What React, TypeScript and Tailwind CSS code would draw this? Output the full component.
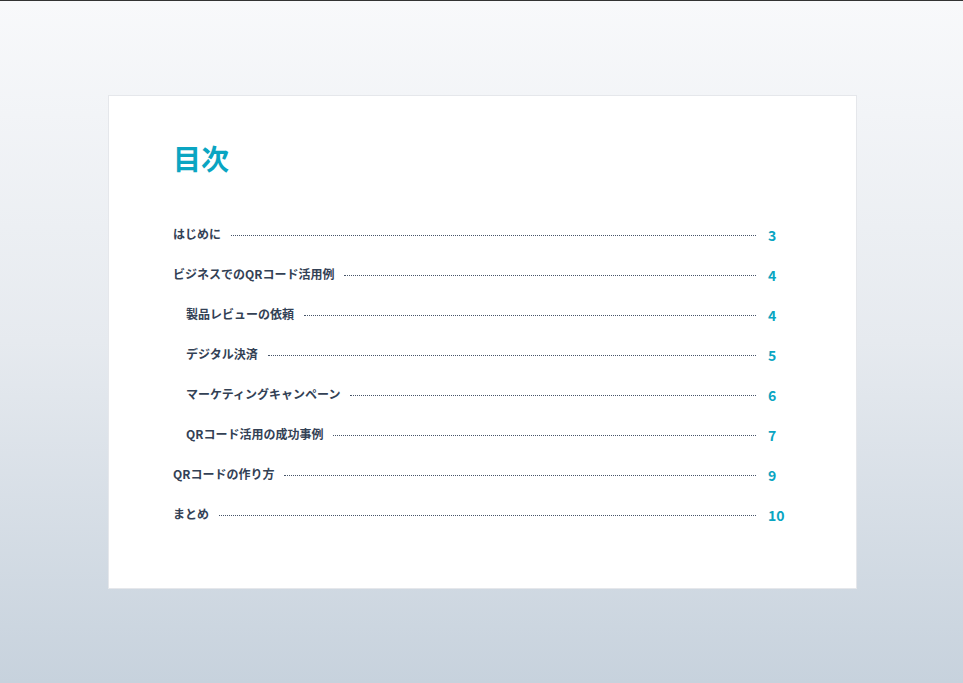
import React from "react";

const items = [
  { title: "はじめに", page: 3, sub: false },
  { title: "ビジネスでのQRコード活用例", page: 4, sub: false },
  { title: "製品レビューの依頼", page: 4, sub: true },
  { title: "デジタル決済", page: 5, sub: true },
  { title: "マーケティングキャンペーン", page: 6, sub: true },
  { title: "QRコード活用の成功事例", page: 7, sub: true },
  { title: "QRコードの作り方", page: 9, sub: false },
  { title: "まとめ", page: 10, sub: false },
];

export default function App() {
  return (
    <div
      className="w-[963px] h-[683px] border-t border-[#333] bg-gradient-to-b from-[#f8f9fb] via-[#e6eaef] to-[#c7d2dd] pt-[94px] pl-[108px]"
      style={{ fontFamily: '"Noto Sans CJK JP", "Noto Sans", sans-serif' }}
    >
      <div className="w-[749px] h-[494px] bg-white border border-[#e5e7eb] pl-[64px] pr-[64px] pt-[42px]">
        <h1 className="text-[28px] font-bold text-[#0aa5c2] leading-[40px]">目次</h1>
        <div className="mt-[36px] flex flex-col">
          {items.map((it) => (
            <div key={it.title} className={`flex items-center h-[40px] ${it.sub ? "pl-[13px]" : ""}`}>
              <span className="text-[12px] font-bold text-[#334155] whitespace-nowrap">{it.title}</span>
              <span className="flex-1 mx-[10px] mr-[12px] border-b border-dotted border-[#475569] translate-y-[1px]" />
              <span className="w-[24px] text-[14px] font-bold text-[#0aa5c2] translate-y-[1px]">{it.page}</span>
            </div>
          ))}
        </div>
      </div>
    </div>
  );
}
